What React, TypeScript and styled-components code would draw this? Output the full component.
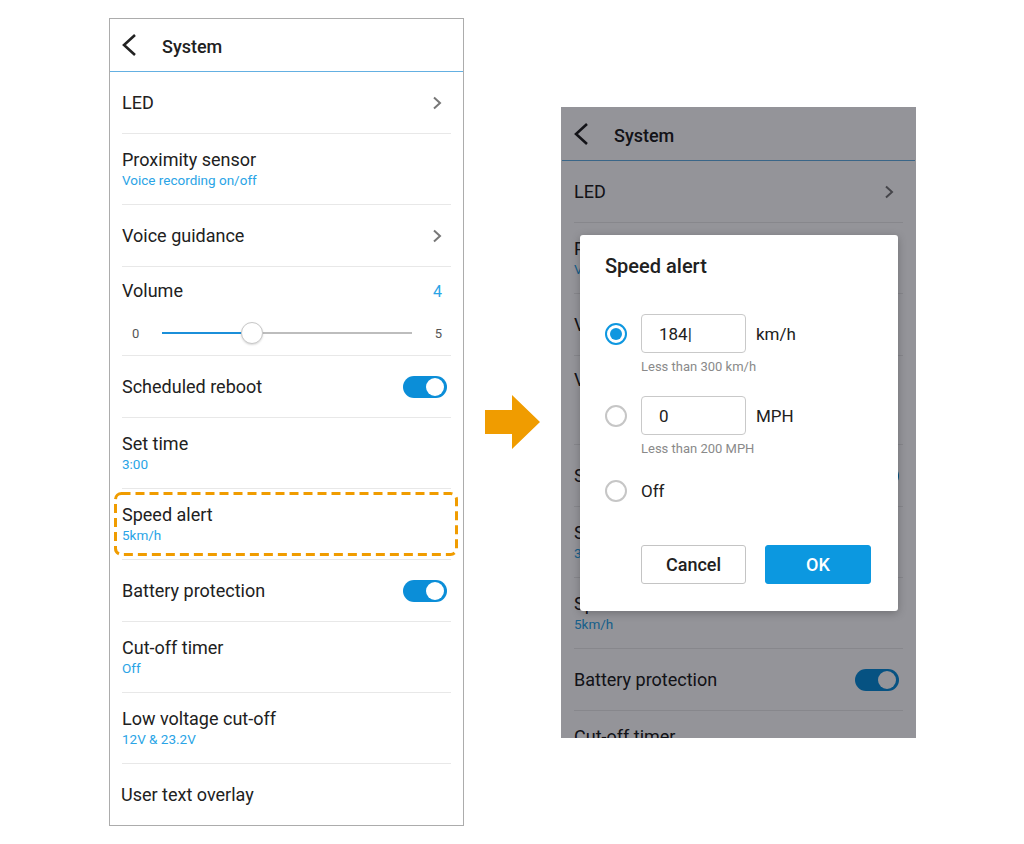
import React from "react";
import styled, { createGlobalStyle } from "styled-components";

const GlobalStyle = createGlobalStyle`
  body {
    margin: 0;
    background: #ffffff;
    font-family: Roboto, "Liberation Sans", Arial, sans-serif;
    color: #212121;
  }
`;

const BLUE = "#2aa4e6";

type RowKind = "link" | "sub" | "slider" | "toggle" | "plain";

interface SettingRow {
  title: string;
  kind: RowKind;
  sub?: string;
  value?: string;
  highlight?: boolean;
}

const rows: SettingRow[] = [
  { title: "LED", kind: "link" },
  { title: "Proximity sensor", kind: "sub", sub: "Voice recording on/off" },
  { title: "Voice guidance", kind: "link" },
  { title: "Volume", kind: "slider", value: "4" },
  { title: "Scheduled reboot", kind: "toggle" },
  { title: "Set time", kind: "sub", sub: "3:00" },
  { title: "Speed alert", kind: "sub", sub: "5km/h", highlight: true },
  { title: "Battery protection", kind: "toggle" },
  { title: "Cut-off timer", kind: "sub", sub: "Off" },
  { title: "Low voltage cut-off", kind: "sub", sub: "12V & 23.2V" },
  { title: "User text overlay", kind: "plain" },
];

const Page = styled.div`
  display: flex;
  align-items: flex-start;
  padding: 18px 0 0 109px;
`;

const Phone = styled.div<{ $bare?: boolean }>`
  width: 355px;
  box-sizing: border-box;
  border: 1px solid ${({ $bare }) => ($bare ? "transparent" : "#acacac")};
  background: #fff;
`;

const Stage = styled.div`
  position: relative;
  width: 355px;
  height: 631px;
  margin-top: 89px;
  overflow: hidden;
`;

const Dim = styled.div`
  position: absolute;
  inset: 0;
  background: rgba(0, 0, 12, 0.42);
`;

const Header = styled.div`
  height: 52px;
  display: flex;
  align-items: center;
  padding-left: 12px;
  border-bottom: 1px solid #64b0e2;
`;

const HeaderTitle = styled.span`
  margin-left: 24px;
  font-size: 18px;
  font-weight: 500;
  margin-top: 2px;
`;

// height of the row body, without its 1px divider
const heights: Record<RowKind, number> = {
  link: 61,
  plain: 61,
  toggle: 61,
  sub: 70,
  slider: 75,
};

const Row = styled.div<{ $kind: RowKind; $last?: boolean }>`
  position: relative;
  margin: 0 12px;
  height: ${({ $kind }) => heights[$kind]}px;
  border-bottom: ${({ $last }) => ($last ? "none" : "1px solid #e8e8e8")};
  display: flex;
  flex-direction: ${({ $kind }) => ($kind === "slider" ? "column" : "row")};
  align-items: ${({ $kind }) => ($kind === "slider" ? "stretch" : "center")};
  padding-top: ${({ $kind }) => ($kind === "slider" ? "13px" : "0")};
`;

const TextBlock = styled.div`
  flex: 1;
  display: flex;
  flex-direction: column;
`;

const Title = styled.div<{ $shift?: number }>`
  font-size: 18px;
  line-height: 22px;
  margin-left: ${({ $shift }) => $shift || 0}px;
`;

const Sub = styled.div`
  font-size: 13.5px;
  line-height: 18px;
  color: ${BLUE};
`;

const TopLine = styled.div`
  display: flex;
  align-items: center;
  justify-content: space-between;
  padding-right: 9px;
`;

const Value = styled.span`
  font-size: 16px;
  color: ${BLUE};
`;

const SliderLine = styled.div`
  display: flex;
  align-items: center;
  gap: 23px;
  height: 24px;
  margin-top: 19px;
  padding: 0 9px 0 10px;
`;

const SliderLabel = styled.span`
  font-size: 13px;
  color: #555;
`;

const Track = styled.div`
  position: relative;
  flex: 1;
  height: 2px;
  background: #bdbdbd;
`;

const Fill = styled.div`
  height: 100%;
  background: #1b8fd9;
`;

const Thumb = styled.div`
  position: absolute;
  top: 50%;
  width: 22px;
  height: 22px;
  margin: -11px 0 0 -11px;
  border-radius: 50%;
  background: #fff;
  border: 1px solid #c8c8c8;
  box-sizing: border-box;
  box-shadow: 0 1px 2px rgba(0, 0, 0, 0.15);
`;

const Toggle = styled.div`
  width: 44px;
  height: 22px;
  border-radius: 11px;
  background: #0b8ed8;
  display: flex;
  justify-content: flex-end;
  align-items: center;
  padding: 0 3px;
  box-sizing: border-box;
  margin-right: 4px;
`;

const Knob = styled.div`
  width: 18px;
  height: 18px;
  border-radius: 50%;
  background: #fff;
`;

const Chevron = styled.svg`
  margin-right: 9px;
`;

const HighlightFrame = styled.svg`
  position: absolute;
  top: 3px;
  left: -8px;
  pointer-events: none;
`;

const ArrowColumn = styled.div`
  align-self: stretch;
  width: 97px;
  display: flex;
  align-items: center;
  justify-content: center;
`;

/* dialog */

const Dialog = styled.div`
  position: absolute;
  left: 19px;
  top: 128px;
  width: 318px;
  height: 376px;
  box-sizing: border-box;
  background: #fff;
  border-radius: 3px;
  box-shadow: 0 2px 8px rgba(0, 0, 0, 0.25);
  padding: 20px 25px 0;
`;

const DialogTitle = styled.div`
  font-size: 20px;
  line-height: 22px;
  font-weight: 500;
  margin-bottom: 37px;
`;

const Option = styled.div<{ $gap?: number }>`
  margin-top: ${({ $gap }) => $gap || 0}px;
`;

const OptionLine = styled.div`
  display: flex;
  align-items: center;
  gap: 14px;
`;

const Radio = styled.div<{ $on?: boolean }>`
  width: 22px;
  height: 22px;
  box-sizing: border-box;
  border-radius: 50%;
  border: 2px solid ${({ $on }) => ($on ? "#0e97e0" : "#c6c6c6")};
  display: flex;
  align-items: center;
  justify-content: center;
  &::after {
    content: "";
    width: 12px;
    height: 12px;
    border-radius: 50%;
    background: ${({ $on }) => ($on ? "#0e97e0" : "transparent")};
  }
`;

const Field = styled.div`
  width: 105px;
  height: 39px;
  box-sizing: border-box;
  border: 1px solid #c9c9c9;
  border-radius: 4px;
  padding-left: 17px;
  display: flex;
  align-items: center;
  font-size: 17px;
`;

const Unit = styled.span`
  font-size: 17px;
  margin-left: -4px;
`;

const OptionText = styled.span`
  font-size: 17px;
`;

const Hint = styled.div`
  margin: 6px 0 0 36px;
  font-size: 13px;
  line-height: 16px;
  color: #8a8a8a;
`;

const ButtonRow = styled.div`
  display: flex;
  gap: 19px;
  margin-top: 43px;
  padding-left: 36px;
`;

const Button = styled.div<{ $primary?: boolean }>`
  width: ${({ $primary }) => ($primary ? 106 : 105)}px;
  height: 39px;
  box-sizing: border-box;
  border-radius: 3px;
  border: 1px solid ${({ $primary }) => ($primary ? "#0c98e0" : "#c4c4c4")};
  background: ${({ $primary }) => ($primary ? "#0c98e0" : "#fff")};
  color: ${({ $primary }) => ($primary ? "#fff" : "#212121")};
  display: flex;
  align-items: center;
  justify-content: center;
  font-size: 18px;
  font-weight: 500;
`;

const BackIcon = () => (
  <svg width="16" height="24" viewBox="0 0 16 24">
    <polyline points="13,2 2,12 13,22" fill="none" stroke="#222" strokeWidth="2.6" />
  </svg>
);

const NextIcon = () => (
  <Chevron width="10" height="14" viewBox="0 0 10 14">
    <polyline points="2,1.5 8,7 2,12.5" fill="none" stroke="#777" strokeWidth="2" />
  </Chevron>
);

const Arrow = () => (
  <svg width="56" height="54" viewBox="0 0 56 54">
    <polygon points="0,15 27,15 27,0 55,27 27,54 27,39 0,39" fill="#f09c00" />
  </svg>
);

const Highlight = () => (
  <HighlightFrame width="344" height="64" viewBox="0 0 344 64">
    <rect
      x="1.5"
      y="1.5"
      width="341"
      height="61"
      rx="6"
      fill="none"
      stroke="#f09c00"
      strokeWidth="3"
      strokeDasharray="9 5"
    />
  </HighlightFrame>
);

const RowContent = ({ row }: { row: SettingRow }) => {
  if (row.kind === "slider") {
    const pct = 36;
    return (
      <>
        <TopLine>
          <Title>{row.title}</Title>
          <Value>{row.value}</Value>
        </TopLine>
        <SliderLine>
          <SliderLabel>0</SliderLabel>
          <Track>
            <Fill style={{ width: `${pct}%` }} />
            <Thumb style={{ left: `${pct}%` }} />
          </Track>
          <SliderLabel>5</SliderLabel>
        </SliderLine>
      </>
    );
  }
  return (
    <>
      <TextBlock>
        <Title $shift={row.kind === "plain" ? -1 : 0}>{row.title}</Title>
        {row.sub && <Sub>{row.sub}</Sub>}
      </TextBlock>
      {row.kind === "link" && <NextIcon />}
      {row.kind === "toggle" && (
        <Toggle>
          <Knob />
        </Toggle>
      )}
    </>
  );
};

const SystemScreen = ({ bare, marked }: { bare?: boolean; marked?: boolean }) => (
  <Phone $bare={bare}>
    <Header>
      <BackIcon />
      <HeaderTitle>System</HeaderTitle>
    </Header>
    {rows.map((row, i) => (
      <Row key={row.title} $kind={row.kind} $last={i === rows.length - 1}>
        <RowContent row={row} />
        {marked && row.highlight && <Highlight />}
      </Row>
    ))}
  </Phone>
);

export default function App() {
  return (
    <>
      <GlobalStyle />
      <Page>
        <SystemScreen marked />
        <ArrowColumn>
          <Arrow />
        </ArrowColumn>
        <Stage>
          <SystemScreen bare />
          <Dim />
          <Dialog>
            <DialogTitle>Speed alert</DialogTitle>
            <Option>
              <OptionLine>
                <Radio $on />
                <Field>184|</Field>
                <Unit>km/h</Unit>
              </OptionLine>
              <Hint>Less than 300 km/h</Hint>
            </Option>
            <Option $gap={21}>
              <OptionLine>
                <Radio />
                <Field>0</Field>
                <Unit>MPH</Unit>
              </OptionLine>
              <Hint>Less than 200 MPH</Hint>
            </Option>
            <Option $gap={23}>
              <OptionLine>
                <Radio />
                <OptionText>Off</OptionText>
              </OptionLine>
            </Option>
            <ButtonRow>
              <Button>Cancel</Button>
              <Button $primary>OK</Button>
            </ButtonRow>
          </Dialog>
        </Stage>
      </Page>
    </>
  );
}
